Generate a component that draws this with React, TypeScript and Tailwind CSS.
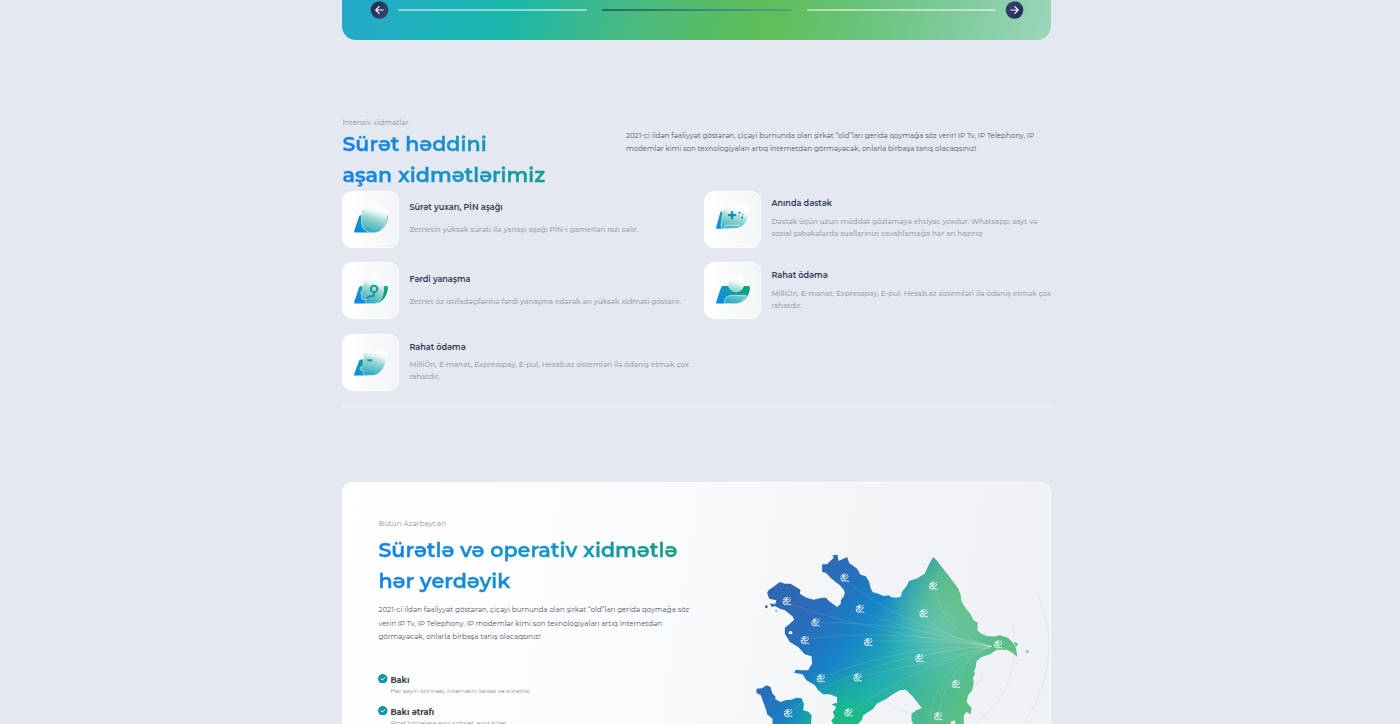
import React from 'react';

function Arrow({ flip = false }: { flip?: boolean }) {
  return (
    <svg viewBox={flip ? '0.5 0 18 18' : '-0.5 0 18 18'} className={flip ? 'size-[18px] shrink-0 rotate-180 overflow-visible' : 'size-[18px] shrink-0 overflow-visible'}>
      <defs>
        <linearGradient id={flip ? 'arrR' : 'arrL'} x1="0" y1="0" x2="1" y2="1">
          <stop offset="0" stopColor="#1d2a55" />
          <stop offset="1" stopColor="#3d4672" />
        </linearGradient>
      </defs>
      <circle cx="9" cy="9" r="8.8" fill={`url(#${flip ? 'arrR' : 'arrL'})`} />
      <path d="M12.6 9H5.4M8.6 5.7L5.3 9l3.3 3.3" fill="none" stroke="#fff" strokeWidth="1.2" strokeLinecap="round" strokeLinejoin="round" />
    </svg>
  );
}

type IconKind = 'shield' | 'game' | 'head' | 'user' | 'puzzle';

const BASE = 'M7.2 10H32.6Q34.4 10 34.2 12C33.2 21 28 27.6 19.5 27.6H1.8Q-.2 27.6 .6 25.4L5.2 11.6Q5.7 10 7.2 10Z';

function ServiceIcon({ kind }: { kind: IconKind }) {
  const base = `url(#base-${kind})`;
  const glass = `url(#glass-${kind})`;
  return (
    <svg viewBox="-0.8 0 35 29" className="h-[29px] w-[35px] overflow-visible">
      <defs>
        <linearGradient id={`base-${kind}`} x1="0" y1="1" x2="1" y2="0.4">
          <stop offset="0" stopColor="#0a84e8" />
          <stop offset="0.45" stopColor="#1296c8" />
          <stop offset="1" stopColor="#0da279" />
        </linearGradient>
        <linearGradient id={`glass-${kind}`} gradientUnits="userSpaceOnUse" x1="22" y1="2" x2="14" y2="28">
          <stop offset="0" stopColor="#ffffff" />
          <stop offset="0.2" stopColor="#e9f6f4" />
          <stop offset="0.42" stopColor="#9fd8d3" />
          <stop offset="0.75" stopColor="#58bdc4" />
          <stop offset="1" stopColor="#259fc8" />
        </linearGradient>
      </defs>
      {kind === 'shield' && (
        <>
          <path d={BASE} fill={base} />
          <path d="M7.800 5.200C12 1.400 16 .700 20.500.700S29.500 1.800 33.400 5.200V10C33.400 20 28 27.800 19.500 27.800 12 27.800 7.800 23 7.800 17Z" fill={glass} stroke="#fff" strokeOpacity=".75" strokeWidth=".7" />
        </>
      )}
      {kind === 'game' && (
        <>
          <path d="M5.400 6.500H12V23.700H1.500Q0 23.700.400 22L4.500 7.500Q4.800 6.500 5.400 6.500Z" fill={base} />
          <path d="M10.500 1H31Q34 1.500 33.700 6C33.200 15 28 23.600 18.500 23.600H6.800C4.800 23.600 5.300 19 5.900 14.500L7.200 5Q7.800 1 10.500 1Z" fill={glass} stroke="#fff" strokeOpacity=".75" strokeWidth=".7" />
          <path d="M16.300 7V13.400M13.100 10.200H19.500" stroke="#128fae" strokeWidth="2.200" strokeLinecap="round" />
          <g fill="#139fa0">
            <circle cx="23.800" cy="7.800" r="1.100" />
            <circle cx="26.300" cy="12.700" r="1.100" />
          </g>
          <g fill="#4bb8ae">
            <circle cx="27" cy="9.600" r=".8" />
            <circle cx="22.600" cy="11" r=".7" />
          </g>
          <path d="M8.500 23.300Q9 20.200 12.500 20.200H24" fill="none" stroke="#fff" strokeOpacity=".75" strokeWidth=".8" />
        </>
      )}
      {kind === 'head' && (
        <>
          <path d={BASE} fill={base} />
          <path d="M8.800 10C9.500 4.500 14 .8 19.500.8S30 4.500 30 11C30 20.500 26 27.600 19.500 27.600H12V23.500H9.400Q7.600 23.500 8 21.600L8.200 19.400 6.800 17.400 8.800 13.500Z" fill={glass} stroke="#fff" strokeOpacity=".75" strokeWidth=".7" />
          <path d="M20.200 16.500V18.200Q20.200 20.200 18.200 20.200H16L13.500 21.700" fill="none" stroke="#139a9e" strokeWidth="1.800" strokeLinecap="round" />
          <circle cx="20.200" cy="13" r="3.200" fill="none" stroke="#139a9e" strokeWidth="2" />
          <path d="M20.600 1V7M14 5.500L16.500 9M26.500 6L24.500 9" stroke="#fff" strokeWidth=".9" />
        </>
      )}
      {kind === 'user' && (
        <>
          <path d={BASE} fill={base} />
          <circle cx="20.300" cy="7.800" r="7.900" fill={glass} stroke="#fff" strokeOpacity=".7" strokeWidth=".6" />
          <path d="M9 27.300C7.800 22.500 11.500 19.300 17 19.300H29.800Q31.300 19.300 30.400 21C27.700 25.400 24.500 27.600 19.500 27.600Z" fill={glass} stroke="#fff" strokeOpacity=".75" strokeWidth=".7" />
        </>
      )}
      {kind === 'puzzle' && (
        <>
          <path d="M7.200 11.500H13V27.600H1.800Q-.2 27.600.600 25.400L5.200 13.100Q5.700 11.500 7.200 11.500Z" fill={base} />
          <path d="M9.500 4.500H15.500Q15.700 1.200 18 1.200T20.500 4.500H25Q25.300 1.200 27 1.200T29.200 4.500H33C33.400 16 28 27.400 18.500 27.400H11.500Q9.500 27.400 9.500 25.600V22.500H8.300Q6.300 22.500 6.300 20.600T8.300 18.600H9.500Z" fill={glass} stroke="#fff" strokeOpacity=".75" strokeWidth=".7" />
          <path d="M13.500 12.300H18.500" stroke="#0f93b4" strokeWidth="2" />
        </>
      )}
    </svg>
  );
}

function Service({ kind, title, lines }: { kind: IconKind; title: string; lines: string[] }) {
  return (
    <div className="flex items-center">
      <div className="flex size-[57px] shrink-0 items-center justify-center rounded-[10px] border border-white bg-linear-to-r from-white to-[#f3f4f7]">
        <ServiceIcon kind={kind} />
      </div>
      <div className={lines.length > 1 ? 'mb-[1.200px] ml-[10px] flex flex-col gap-[6.700px]' : 'mb-[1.200px] ml-[10px] flex flex-col gap-[11.200px]'}>
        <h3 className="text-[8.100px] leading-[12px] font-semibold text-[#303a58]">{title}</h3>
        <p className="text-[7.225px] leading-[12px] font-medium text-[#9ca1b3]">
          {lines.map((l) => (
            <span key={l} className="block">{l}</span>
          ))}
        </p>
      </div>
    </div>
  );
}

function City({ name, note }: { name: string; note: string }) {
  return (
    <li className="flex h-[32px] gap-[2.500px]">
      <svg viewBox="0 0 10 10" className="size-[9.500px] shrink-0">
        <defs>
          <linearGradient id="tick" x1="0" y1="1" x2="1" y2="0">
            <stop offset="0" stopColor="#1583dc" />
            <stop offset="1" stopColor="#10a184" />
          </linearGradient>
        </defs>
        <circle cx="5" cy="5" r="5" fill="url(#tick)" />
        <path d="M3 5.200L4.500 6.500L7.100 3.700" fill="none" stroke="#fff" strokeWidth="1" strokeLinecap="round" strokeLinejoin="round" />
      </svg>
      <div>
        <h4 className="text-[8.150px] leading-[12px] font-bold text-[#3c3f4d]">{name}</h4>
        <p className="text-[6.100px] leading-[10px] text-[#85899a]">{note}</p>
      </div>
    </li>
  );
}

const LAND =
  'M82 158L86 150 104 137 120 125 135 130 152 130 182 148 180 160 200 172 222 178 245 172 258 172 270 184 285 195 292 200 303 190 303 180 312 168 315 158 312 148 300 135 275 115 258 97 247 95 247 72 262 72 268 65 282 52 278 45 293 43 296 62 322 50 328 68 352 85 362 103 378 108 388 125 392 142 398 155 415 160 432 167 447 165 454 171 470 172 484 169 486 155 500 138 508 122 530 115 555 100 568 72 580 51 590 60 605 80 625 105 640 125 655 145 662 165 665 185 678 205 692 222 700 240 713 247 712 270 725 281 740 287 760 289 780 285 805 293 820 308 828 322 833 350 815 335 800 328 770 328 750 342 725 350 710 362 708 380 703 390 705 402 699 412 702 425 697 450 685 465 680 485 695 503 693 522 680 515 672 525 672 560 648 560 645 540 632 545 635 560 525 560 515 540 515 520 530 510 546 503 520 470 498 448 480 450 460 461 440 475 410 490 400 505 370 525 365 540 345 560 285 560 275 540 285 530 280 515 290 500 275 492 292 488 292 470 270 462 250 462 235 450 225 435 200 420 188 402 163 397 168 388 185 390 205 390 210 380 217 370 215 348 195 342 175 320 150 305 135 280 135 262 150 250 163 238 158 228 135 210 120 205 104 196 110 180 88 175ZM90 190L103 190 107 197 96 200ZM75 196L83 194 83 203 77 204ZM106 209L112 211 109 216ZM823 305L832 308 834 315 828 319ZM857 332L864 330 867 335 862 338ZM50 445L66 444 80 435 92 440 98 460 108 470 105 475 122 485 140 479 155 478 170 472 185 474 192 490 190 510 205 514 215 525 213 560 98 560 98 535 82 522 78 506 72 490 63 465 50 458Z';

const NODES: [number, number][] = [
  [141, 182], [227, 246], [195, 299], [314, 112], [360, 205], [385, 305], [243, 414], [353, 411],
  [145, 518], [326, 516], [580, 136], [551, 219], [539, 353], [775, 312], [648, 431], [595, 527],
];

const LINKS = [
  'M155 192Q420 285 755 318', 'M242 247Q480 245 755 318', 'M210 294Q460 265 755 318', 'M324 124Q480 255 755 318',
  'M372 215Q520 280 755 318', 'M400 302Q580 298 755 318', 'M257 408Q480 315 755 318', 'M367 407Q560 370 755 318',
  'M160 508C300 390 500 340 755 318', 'M338 510Q520 380 755 318', 'M587 152Q615 285 755 318', 'M562 234Q620 300 755 318',
  'M553 348Q640 320 755 318', 'M656 420Q670 350 755 318', 'M598 515C610 430 670 350 755 318', 'M570 560C570 430 650 350 755 318',
];

function CoverageMap() {
  return (
    <svg viewBox="-2.500 -172 933 729" className="h-[243px] w-[311px] shrink-0">
      <defs>
        <linearGradient id="land" gradientUnits="userSpaceOnUse" x1="190" y1="130" x2="690" y2="480">
          <stop offset="0" stopColor="#2f68b2" />
          <stop offset="0.160" stopColor="#276fbc" />
          <stop offset="0.350" stopColor="#1684c7" />
          <stop offset="0.580" stopColor="#22acb2" />
          <stop offset="0.780" stopColor="#3fb99a" />
          <stop offset="1" stopColor="#5cbf84" />
        </linearGradient>
        <radialGradient id="east" gradientUnits="userSpaceOnUse" cx="690" cy="160" r="235">
          <stop offset="0" stopColor="#5fbd78" />
          <stop offset="0.400" stopColor="#5fbd82" stopOpacity=".85" />
          <stop offset="1" stopColor="#5fbd88" stopOpacity="0" />
        </radialGradient>
        <radialGradient id="south" gradientUnits="userSpaceOnUse" cx="310" cy="570" r="190">
          <stop offset="0" stopColor="#18bd78" />
          <stop offset="0.400" stopColor="#18bd84" stopOpacity=".7" />
          <stop offset="1" stopColor="#18bd90" stopOpacity="0" />
        </radialGradient>
        <radialGradient id="haze" gradientUnits="userSpaceOnUse" cx="600" cy="270" r="190">
          <stop offset="0" stopColor="#8fd3d0" stopOpacity=".4" />
          <stop offset="1" stopColor="#8fd3d0" stopOpacity="0" />
        </radialGradient>
        <g id="pin" fill="none" stroke="#fff" strokeLinecap="round">
          <path d="M-11 -4L-5 -9 2 -11M-11 1L-9 9-3 11M10 -10L3 -4-4 -3-8 4M-3 -3L-2 3 5 9 12 11M2 2L8 1 11 -4M-3 7L2 11M-6 -5L0 -7" strokeWidth="2.600" />
        </g>
      </defs>
      <g fill="none" stroke="#d9dce2" strokeWidth="1.600">
        <path d="M731 395A200 200 0 0 1 400 458" />
        <path d="M814 241A280 280 0 0 1 690 560" />
        <path d="M894 161A383 383 0 0 1 838 565" />
      </g>
      <path d={LAND} fill="url(#land)" />
      <path d={LAND} fill="url(#east)" />
      <path d={LAND} fill="url(#south)" />
      <path d={LAND} fill="url(#haze)" />
      <ellipse cx="152" cy="277" rx="6" ry="5" fill="#f6f8fa" />
      <g fill="none" stroke="#fff" strokeOpacity=".22" strokeWidth="1.500">
        {LINKS.map((d) => (
          <path key={d} d={d} />
        ))}
      </g>
      {NODES.map(([x, y]) => (
        <use key={`${x}-${y}`} href="#pin" x={x} y={y} />
      ))}
    </svg>
  );
}

const HEADING =
  'w-fit bg-clip-text text-[20.650px] leading-[31px] font-semibold whitespace-nowrap text-transparent [-webkit-text-stroke:0.350px_transparent]';

export default function App() {
  return (
    <div className="h-[724px] overflow-hidden bg-[#e4e8f1] font-[Montserrat,Inter,sans-serif]">
      <main className="ml-[342.400px] flex w-[709px] flex-col">
        <section className="flex h-[40.300px] items-start rounded-b-[14px] bg-[linear-gradient(110deg,#25a8cb_0%,#1eb1bb_12%,#1ab7aa_24%,#43b987_38%,#55bc6c_50%,#5fbe58_60%,#68c379_72%,#7fcb9d_86%,#9dd6bd_100%)] px-[28px] pt-px">
          <Arrow />
          <div className="mt-[8px] ml-[9.500px] flex flex-1 gap-[15px]">
            <div className="h-[2px] flex-1 rounded bg-white/50" />
            <div className="h-[2px] flex-1 rounded bg-linear-to-r from-[#1d6b68] to-[#5d9f7b]" />
            <div className="h-[2px] flex-1 rounded bg-white/50" />
          </div>
          <div className="ml-[9.500px] flex">
            <Arrow flip />
          </div>
        </section>

        <section className="mt-[76.300px] border-b-[1.500px] border-[#f3f5f9] pb-[14.800px]">
          <div className="flex h-[74px]">
            <div className="w-[283.500px]">
              <p className="relative top-[0.400px] text-[7.350px] leading-[12px] text-[#8d92a3]">İntensiv xidmətlər</p>
              <h2 className={`${HEADING} -mt-[0.200px] bg-[linear-gradient(90deg,#1481ec_0%,#1795bf_60%,#129d86_100%)]`}>
                Sürət həddini
                <br />
                aşan xidmətlərimiz
              </h2>
            </div>
            <p className="mt-[12px] text-[7.120px] leading-[13.700px] whitespace-nowrap text-[#50566b]">
              2021-ci ildən fəaliyyət göstərən, çiçəyi burnunda olan şirkət “old”ları geridə qoymağa söz verir! IP Tv, IP Telephony, IP
              <br />
              modemlər kimi son texnologiyaları artıq internetdən görməyəcək, onlarla birbaşa tanış olacaqsınız!
            </p>
          </div>
          <div className="grid grid-cols-[347px_347px] gap-x-[15px] gap-y-[14.700px] whitespace-nowrap">
            <Service kind="shield" title="Sürət yuxarı, PİN aşağı" lines={['Zetnetin yüksək sürəti ilə yanaşı aşağı PİN-i gamerləri razı salır.']} />
            <Service kind="game" title="Anında dəstək" lines={['Dəstək üçün uzun müddət gözləməyə ehtiyac yoxdur. Whatsapp, sayt və', 'sosial şəbəkələrdə suallarinizi cavablamağa hər an hazırıq']} />
            <Service kind="head" title="Fərdi yanaşma" lines={['Zetnet öz istifadəçilərinə fərdi yanaşma edərək ən yüksək xidməti göstərir.']} />
            <Service kind="user" title="Rahat ödəmə" lines={['MilliÖn, E-manat, Expresspay, E-pul, Hesab.az sistemləri ilə ödəniş etmək çox', 'rahatdır.']} />
            <Service kind="puzzle" title="Rahat ödəmə" lines={['MilliÖn, E-manat, Expresspay, E-pul, Hesab.az sistemləri ilə ödəniş etmək çox', 'rahatdır.']} />
          </div>
        </section>

        <section className="mt-[74.800px] flex h-[300px] justify-between rounded-[10px] border border-white bg-[linear-gradient(100deg,#ffffff_0%,#fafbfc_42%,#f1f3f6_75%,#eff1f5_100%)] pl-[35px]">
          <div className="flex w-[320px] flex-col pt-[35.700px] whitespace-nowrap">
            <p className="text-[7.300px] leading-[12px] text-[#8d92a3]">Bütün Azərbaycan</p>
            <h2 className={`${HEADING} mt-[4px] bg-[linear-gradient(90deg,#1481ec_0%,#1795bf_60%,#149d79_100%)]`}>
              Sürətlə və operativ xidmətlə
              <br />
              hər yerdəyik
            </h2>
            <p className="mt-[6.600px] text-[7.120px] leading-[13.700px] text-[#50566b]">
              2021-ci ildən fəaliyyət göstərən, çiçəyi burnunda olan şirkət “old”ları geridə qoymağa söz
              <br />
              verir! IP Tv, IP Telephony, IP modemlər kimi son texnologiyaları artıq internetdən
              <br />
              görməyəcək, onlarla birbaşa tanış olacaqsınız!
            </p>
            <ul className="mt-[29.700px]">
              <City name="Bakı" note="Hər şeyin köhnəsi, internetin təzəsi və sürətlisi" />
              <City name="Bakı ətrafı" note="Ətraf bölgələrə eyni xidmət, eyni sürət" />
            </ul>
          </div>
          <CoverageMap />
        </section>
      </main>
    </div>
  );
}
